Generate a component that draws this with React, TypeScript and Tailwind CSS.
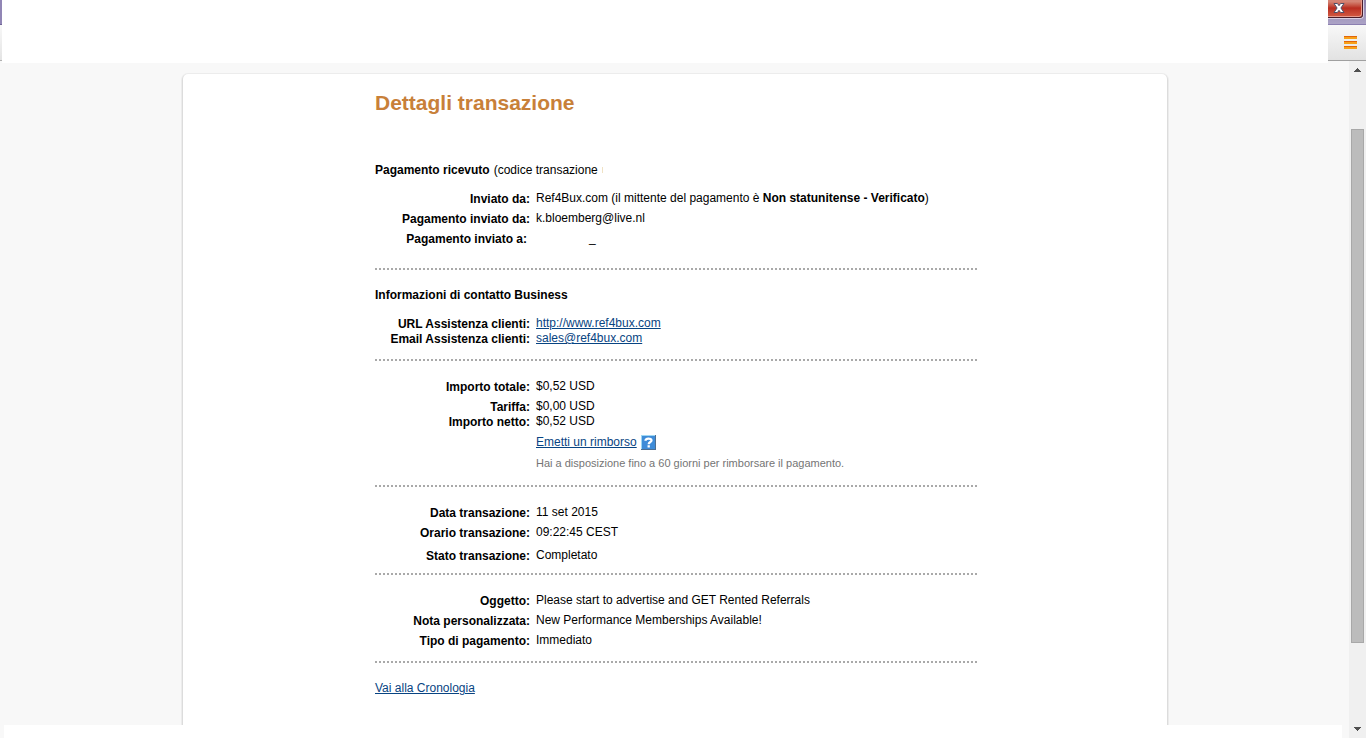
import type { ReactNode } from "react";

function Row({ label, children, className = "" }: { label?: string; children?: ReactNode; className?: string }) {
  return (
    <div className={`flex gap-1.5 ${className}`}>
      <dt className="w-[155px] shrink-0 pt-px text-right font-bold">{label}</dt>
      <dd className="flex-1">{children}</dd>
    </div>
  );
}

function Divider({ className = "" }: { className?: string }) {
  return (
    <hr
      className={`h-0.5 border-0 bg-[repeating-linear-gradient(90deg,#a9a9a9_0_2px,transparent_2px_4px)] ${className}`}
    />
  );
}

function Link({ href, children }: { href: string; children: ReactNode }) {
  return (
    <a href={href} className="text-[#084482] underline">
      {children}
    </a>
  );
}

function WindowChrome() {
  return (
    <header className="flex h-[61px] bg-white">
      <div className="flex w-0.5 flex-col">
        <div className="h-[25px] border-b border-[#6f6596] bg-[#9186b5]" />
        <div className="flex-1 border-b border-[#b0b0b0] bg-linear-to-b from-[#f8f8f8] to-[#e4e4e4]" />
      </div>
      <div className="flex-1" />
      <div className="flex w-[38px] flex-col">
        <div className="h-[25px] border-b border-[#8b7fb0] bg-linear-to-b from-[#8a7da8] to-[#aca3c6] pr-0.5">
          <button
            type="button"
            aria-label="Chiudi"
            className="flex h-[19px] w-full items-start justify-center rounded-br-[4px] border-r border-b border-[#d9cfe4] bg-[#4a1c28] pr-px pb-px"
          >
            <span className="flex h-full w-full justify-center rounded-br-[3px] border-r border-b border-[#e79a8c] bg-linear-to-b from-[#d48474] from-10% via-[#b92d20] via-50% to-[#d0553f] pr-3">
              <svg width="12" height="14" viewBox="0 0 12 14" aria-hidden="true">
                <path
                  d="M1 3.500h3.400L6 5.700l1.600-2.200H11L7.900 8 11 12.500H7.600L6 10.300 4.400 12.500H1L4.100 8z"
                  fill="#fff"
                  stroke="#4f5068"
                />
              </svg>
            </span>
          </button>
        </div>
        <div className="flex flex-1 items-center justify-center border-b border-[#a0a0a0] bg-linear-to-b from-[#f8f8f8] to-[#e2e2e2] pl-1.5">
          <button type="button" aria-label="Menu" className="flex flex-col gap-0.5">
            <span className="h-[3px] w-[13px] border-t border-[#e2650c] bg-[#f7a11a]" />
            <span className="h-[3px] w-[13px] border-t border-[#e2650c] bg-[#f7a11a]" />
            <span className="h-[3px] w-[13px] border-t border-[#e2650c] bg-[#f7a11a]" />
          </button>
        </div>
      </div>
    </header>
  );
}

function ScrollBar() {
  return (
    <aside className="flex w-[17px] flex-col items-center bg-[#f0f0f0] py-[7px]">
      <svg width="7" height="4" viewBox="0 0 7 4" aria-hidden="true">
        <path d="M3 0h1v1h1v1h1v1h1v1H0V3h1V2h1V1h1z" fill="#505050" />
      </svg>
      <div className="flex w-full flex-1 flex-col items-center pt-[57px] pb-[57px]">
        <div className="h-[95%] w-[13px] border border-[#a8a8a8] bg-[#bcbcbc]" />
      </div>
      <svg width="7" height="4" viewBox="0 0 7 4" aria-hidden="true">
        <path d="M3 4h1V3h1V2h1V1h1V0H0v1h1v1h1v1h1z" fill="#505050" />
      </svg>
    </aside>
  );
}

function TransactionDetails() {
  return (
    <article className="mx-auto mt-[11px] w-full max-w-[984px] flex-1 rounded-t-[5px] bg-white pt-[17px] pl-48 shadow-[0_1px_0_1px_#dcdcdc,0_1px_0_2px_#ececec]">
      <div className="max-w-[602px]">
        <h1 className="text-[21px] leading-6 font-bold text-[#c88039]">Dettagli transazione</h1>

        <p className="mt-12 flex items-center gap-1">
          <strong>Pagamento ricevuto</strong>
          <span>(codice transazione</span>
          <span className="h-1.5 w-px bg-[#f0e2c4]" />
        </p>
        <dl className="mt-3.5 flex flex-col gap-[5px]">
          <Row label="Inviato da:">
            Ref4Bux.com (il mittente del pagamento è <strong>Non statunitense - Verificato</strong>)
          </Row>
          <Row label="Pagamento inviato da:">k.bloemberg@live.nl</Row>
          <div className="flex">
            <dt className="w-[152px] pt-px text-right font-bold">Pagamento inviato a:</dt>
            <dd className="pl-[62px]">_</dd>
          </div>
        </dl>

        <Divider className="mt-[22px]" />
        <h2 className="mt-[18px] font-bold">Informazioni di contatto Business</h2>
        <dl className="mt-3.5">
          <Row label="URL Assistenza clienti:">
            <Link href="http://www.ref4bux.com">http://www.ref4bux.com</Link>
          </Row>
          <Row label="Email Assistenza clienti:">
            <Link href="mailto:sales@ref4bux.com">sales@ref4bux.com</Link>
          </Row>
        </dl>

        <Divider className="mt-[13px]" />
        <dl className="mt-[18px]">
          <Row label="Importo totale:">$0,52 USD</Row>
          <Row label="Tariffa:" className="mt-[5px]">$0,00 USD</Row>
          <Row label="Importo netto:">$0,52 USD</Row>
          <Row className="mt-1.5">
            <div className="flex h-3.5 gap-1">
              <Link href="#rimborso">Emetti un rimborso</Link>
              <a href="#aiuto" aria-label="Aiuto">
                <svg width="15" height="15" viewBox="0 0 15 15" aria-hidden="true">
                  <path d="M0 0h15v15H0z" fill="#3f8cd8" />
                  <path d="M0 15V0h15" fill="none" stroke="#9fd8f4" strokeWidth="2" />
                  <path d="M15 0v15H0" fill="none" stroke="#4f6f90" strokeWidth="2" />
                  <path
                    d="M4.500 5.800C4.500 3 10.500 3 10.500 5.400c0 1.700-2.800 1.400-2.800 3.800M7.700 10.200v2.300"
                    fill="none"
                    stroke="#fff"
                    strokeWidth="2.300"
                  />
                </svg>
              </a>
            </div>
            <p className="mt-[7px] text-[11px] text-[#757575]">
              Hai a disposizione fino a 60 giorni per rimborsare il pagamento.
            </p>
          </Row>
        </dl>

        <Divider className="mt-[15px]" />
        <dl className="mt-[18px] flex flex-col gap-[5px]">
          <Row label="Data transazione:">11 set 2015</Row>
          <Row label="Orario transazione:">09:22:45 CEST</Row>
          <Row label="Stato transazione:" className="mt-[3px]">Completato</Row>
        </dl>

        <Divider className="mt-[10px]" />
        <dl className="mt-[18px] flex flex-col gap-[5px]">
          <Row label="Oggetto:">Please start to advertise and GET Rented Referrals</Row>
          <Row label="Nota personalizzata:">New Performance Memberships Available!</Row>
          <Row label="Tipo di pagamento:">Immediato</Row>
        </dl>

        <Divider className="mt-[13px]" />
        <p className="mt-[18px]">
          <Link href="#cronologia">Vai alla Cronologia</Link>
        </p>
      </div>
    </article>
  );
}

export default function App() {
  return (
    <div className="flex min-h-screen flex-col bg-[#f8f8f8] font-['Liberation_Sans',Arial,sans-serif] text-[12px] leading-[14px] text-black">
      <WindowChrome />
      <div className="flex flex-1">
        <main className="flex flex-1 flex-col pl-px">
          <div className="mr-[21px] ml-px h-0.5 bg-white" />
          <TransactionDetails />
          <div className="relative mr-[7px] ml-[3px] h-[13px] bg-white" />
        </main>
        <ScrollBar />
      </div>
    </div>
  );
}
